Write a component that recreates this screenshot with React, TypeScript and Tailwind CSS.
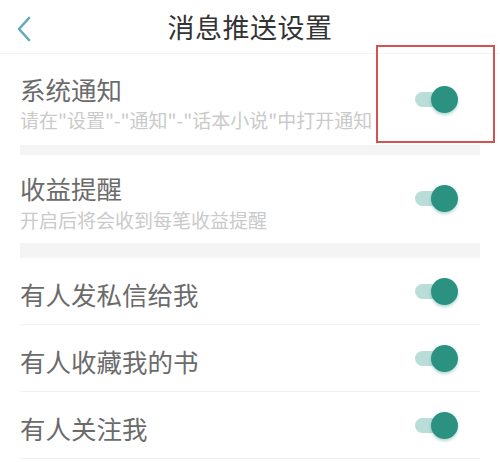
import React from "react";

type Item = { title: string; desc?: string };

const font = { fontFamily: '"Noto Sans CJK SC", "Noto Sans", sans-serif' };

function Toggle({ className = "" }: { className?: string }) {
  return (
    <div className={`relative w-[43px] h-[27px] shrink-0 ${className}`}>
      <div className="absolute left-0 top-[6px] w-[36px] h-[15px] rounded-full bg-[#b9ddd7]" />
      <div className="absolute right-0 top-0 w-[27px] h-[27px] rounded-full bg-[#2b9282] shadow-[0_2px_3px_rgba(43,146,130,0.35)]" />
    </div>
  );
}

const simple: Item[] = [
  { title: "有人发私信给我" },
  { title: "有人收藏我的书" },
  { title: "有人关注我" },
];

export default function App() {
  return (
    <div className="relative w-[500px] h-[462px] bg-white overflow-hidden" style={font}>
      {/* header */}
      <div className="relative h-[54px] flex items-center justify-center border-b border-[#f4f4f4]">
        <svg className="absolute left-[16px] top-[16px]" width="16" height="26" viewBox="0 0 16 26" fill="none">
          <polyline points="13,2 3,13 13,24" stroke="#62a9bd" strokeWidth="2.6" strokeLinecap="round" strokeLinejoin="round" />
        </svg>
        <h1 className="text-[27px] leading-none text-[#333] tracking-[0.5px]">消息推送设置</h1>
      </div>

      {/* section 1 */}
      <div className="flex items-center justify-between pl-[20px] pr-[42px] pt-[20px] pb-[13px]">
        <div>
          <div className="text-[25.5px] leading-[30px] text-[#6b6b6b]">系统通知</div>
          <div className="mt-[4px] text-[19px] leading-[24px] text-[#cacaca]">请在"设置"-"通知"-"话本小说"中打开通知</div>
        </div>
        <Toggle className="mb-[8px]" />
      </div>
      <div className="mx-[20px] h-[10px] bg-[#f4f4f4]" />

      {/* section 2 */}
      <div className="flex items-center justify-between pl-[20px] pr-[42px] pt-[18px] pb-[11px]">
        <div>
          <div className="text-[25.5px] leading-[30px] text-[#6b6b6b]">收益提醒</div>
          <div className="mt-[5px] text-[19px] leading-[24px] text-[#cacaca]">开启后将会收到每笔收益提醒</div>
        </div>
        <Toggle className="mb-[8px]" />
      </div>
      <div className="mx-[20px] h-[15px] bg-[#f4f4f4]" />

      {/* simple rows */}
      <div className="px-[20px]">
        {simple.map((it) => (
          <div key={it.title} className="h-[67px] flex items-center justify-between pr-[22px] border-b border-[#f0f0f0]">
            <span className="text-[25.5px] leading-[30px] text-[#6b6b6b] pt-[6px]">{it.title}</span>
            <Toggle />
          </div>
        ))}
      </div>

      {/* annotation box */}
      <div className="absolute left-[376px] top-[45px] w-[119px] h-[98px] border-2 border-[#d4524f]" />
    </div>
  );
}
